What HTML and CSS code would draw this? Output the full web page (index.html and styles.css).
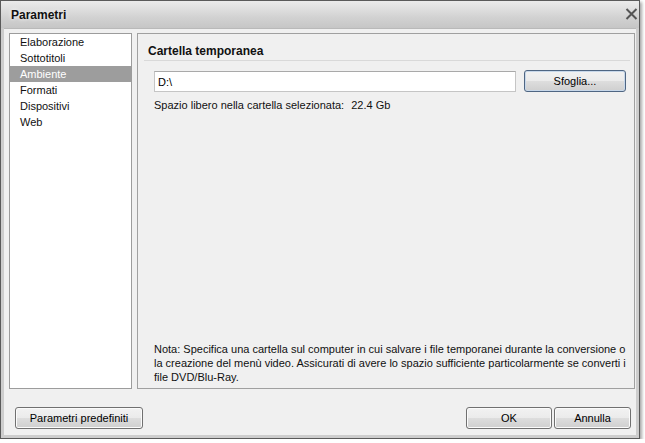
FILE: index.html
```html
<!DOCTYPE html>
<html lang="it">
<head>
    <meta charset="UTF-8">
    <title>Parametri</title>
    <link rel="stylesheet" href="styles.css">
</head>
<body>
    <div class="window">
        <div class="titlebar">
            <span class="title">Parametri</span>
            <svg class="close" width="13" height="12" viewBox="0 0 13 12">
                <path d="M1.5 1 L11.5 11 M11.5 1 L1.5 11" stroke="#555" stroke-width="2" fill="none"/>
            </svg>
        </div>
        <div class="client">
            <div class="main">
                <ul class="sections">
                    <li>Elaborazione</li>
                    <li>Sottotitoli</li>
                    <li class="selected">Ambiente</li>
                    <li>Formati</li>
                    <li>Dispositivi</li>
                    <li>Web</li>
                </ul>
                <div class="panel">
                    <div class="heading">Cartella temporanea</div>
                    <div class="folder-row">
                        <input type="text" class="path" value="D:\">
                        <button class="btn default">Sfoglia...</button>
                    </div>
                    <p class="free">Spazio libero nella cartella selezionata:<span class="size">22.4 Gb</span></p>
                    <p class="note">Nota: Specifica una cartella sul computer in cui salvare i file temporanei durante la conversione o<br>la creazione del menù video. Assicurati di avere lo spazio sufficiente particolarmente se converti i<br>file DVD/Blu-Ray.</p>
                </div>
            </div>
            <div class="footer">
                <button class="btn wide">Parametri predefiniti</button>
                <div class="actions">
                    <button class="btn ok">OK</button>
                    <button class="btn cancel">Annulla</button>
                </div>
            </div>
        </div>
    </div>
</body>
</html>
```

FILE: styles.css
```css
body {
    margin: 0;
    background: #ffffff;
    font-family: "Liberation Sans", Arial, sans-serif;
    font-size: 11px;
    color: #111;
}
.window {
    box-sizing: border-box;
    width: 640px;
    height: 439px;
    border: 1px solid #5a5a5a;
    background: #cdcdcd;
    display: flex;
    flex-direction: column;
    box-shadow: 2px 2px 3px rgba(0, 0, 0, 0.35);
}
.titlebar {
    height: 27px;
    flex: none;
    display: flex;
    align-items: center;
    justify-content: space-between;
    padding: 0 1px 0 10px;
    background: linear-gradient(#ebebeb, #d2d2d2 60%, #c6c6c6);
}
.title {
    font-size: 12px;
    font-weight: bold;
    color: #111;
    text-shadow: 0 0 4px #fff;
}
.close {
    margin-top: -2px;
}
.client {
    flex: 1;
    display: flex;
    flex-direction: column;
    margin: 0 3px 3px 3px;
    padding: 4px 1px 0 5px;
    background: #f0f0f0;
    border-top: 1px solid #b9b9b9;
}
.main {
    display: flex;
    gap: 5px;
    height: 356px;
}
.sections {
    list-style: none;
    margin: 0;
    padding: 0;
    width: 121px;
    border: 1px solid #9c9c9c;
    background: #fff;
}
.sections li {
    height: 16px;
    line-height: 16px;
    padding-left: 10px;
}
.sections .selected {
    background: #9d9d9d;
    color: #fff;
}
.panel {
    flex: 1;
    display: flex;
    flex-direction: column;
    border: 1px solid #a0a0a0;
    background: #f0f0f0;
}
.heading {
    margin: 9px 4px 0 6px;
    padding: 0 0 1px 4px;
    line-height: 16px;
    font-size: 12px;
    font-weight: bold;
    border-bottom: 1px solid #d9d9d9;
}
.folder-row {
    display: flex;
    align-items: flex-start;
    gap: 8px;
    margin-top: 9px;
    padding: 0 8px 0 16px;
}
.path {
    box-sizing: border-box;
    width: 362px;
    height: 21px;
    margin: 1px 0 0 0;
    padding: 0 3px;
    border: 1px solid #c5c5c5;
    border-top-color: #a9a9a9;
    background: #fff;
    font-family: inherit;
    font-size: 11px;
    color: #000;
}
.btn {
    box-sizing: border-box;
    height: 22px;
    padding: 0;
    border: 1px solid #707070;
    border-radius: 3px;
    background: linear-gradient(#f2f2f2, #ebebeb 48%, #dddddd 52%, #cfcfcf);
    font-family: inherit;
    font-size: 11px;
    color: #000;
    box-shadow: inset 0 0 0 1px #fbfbfb;
}
.btn.default {
    width: 102px;
    border-color: #4f6683;
    box-shadow: inset 0 0 0 1px #c8d8ea;
}
.free {
    margin: 5px 0 0 0;
    padding-left: 16px;
    line-height: 16px;
}
.size {
    margin-left: 7px;
}
.note {
    margin: auto 0 0 0;
    padding: 0 4px 4px 16px;
    line-height: 14px;
}
.footer {
    flex: 1;
    display: flex;
    justify-content: space-between;
    align-items: flex-start;
    padding: 18px 4px 0 6px;
}
.btn.wide {
    width: 128px;
}
.actions {
    display: flex;
    gap: 2px;
}
.btn.ok {
    width: 86px;
}
.btn.cancel {
    width: 77px;
}
```
